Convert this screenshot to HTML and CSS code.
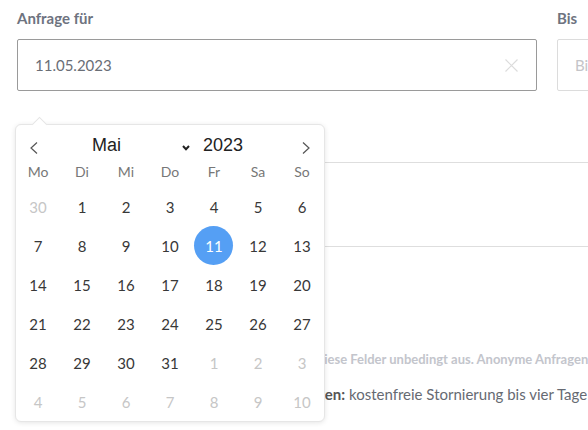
FILE: index.html
```html
<!DOCTYPE html>
<html lang="de">
<head>
<meta charset="utf-8">
<title>Anfrage</title>
<link rel="stylesheet" href="styles.css">
</head>
<body>
<div class="page">
  <div class="fields">
    <div class="field field-from">
      <label class="label">Anfrage für</label>
      <div class="input is-focused">
        <span class="value">11.05.2023</span>
        <svg class="clear" width="13" height="13" viewBox="0 0 13 13"><path d="M0.5 0.5 L12.5 12.5 M12.5 0.5 L0.5 12.5" stroke="#dcdcdc" stroke-width="1.2" fill="none"/></svg>
      </div>
    </div>
    <div class="field field-to">
      <label class="label">Bis</label>
      <div class="input">
        <span class="placeholder">Bis...</span>
      </div>
    </div>
  </div>

  <div class="row row-a"></div>
  <div class="row row-b"></div>

  <p class="hint">Für eine schnelle Bearbeitung füllen Sie bitte immer diese Felder unbedingt aus. Anonyme Anfragen werden nicht bearbeitet.</p>
  <p class="storno"><b>Kurzer Hinweis zu den Stornierungsbedingungen:</b> kostenfreie Stornierung bis vier Tage vor der Veranstaltung.</p>

  <div class="datepicker">
    <div class="dp-head">
      <button class="dp-nav dp-prev" aria-label="Vorheriger Monat">
        <svg width="8" height="12" viewBox="0 0 8 12"><path d="M7 0.5 L1 6 L7 11.5" stroke="#555" stroke-width="1.2" fill="none"/></svg>
      </button>
      <div class="dp-month">
        <span>Mai</span>
        <svg class="dp-caret" width="8" height="6" viewBox="0 0 8 6"><path d="M1 1 L4 4.2 L7 1" stroke="#222" stroke-width="2" fill="none"/></svg>
      </div>
      <span class="dp-year">2023</span>
      <button class="dp-nav dp-next" aria-label="Nächster Monat">
        <svg width="8" height="12" viewBox="0 0 8 12"><path d="M1 0.5 L7 6 L1 11.5" stroke="#555" stroke-width="1.2" fill="none"/></svg>
      </button>
    </div>
    <div class="dp-weekdays">
      <span>Mo</span><span>Di</span><span>Mi</span><span>Do</span><span>Fr</span><span>Sa</span><span>So</span>
    </div>
    <div class="dp-days">
      <span class="day muted">30</span><span class="day">1</span><span class="day">2</span><span class="day">3</span><span class="day">4</span><span class="day">5</span><span class="day">6</span>
      <span class="day">7</span><span class="day">8</span><span class="day">9</span><span class="day">10</span><span class="day selected">11</span><span class="day">12</span><span class="day">13</span>
      <span class="day">14</span><span class="day">15</span><span class="day">16</span><span class="day">17</span><span class="day">18</span><span class="day">19</span><span class="day">20</span>
      <span class="day">21</span><span class="day">22</span><span class="day">23</span><span class="day">24</span><span class="day">25</span><span class="day">26</span><span class="day">27</span>
      <span class="day">28</span><span class="day">29</span><span class="day">30</span><span class="day">31</span><span class="day muted">1</span><span class="day muted">2</span><span class="day muted">3</span>
      <span class="day muted">4</span><span class="day muted">5</span><span class="day muted">6</span><span class="day muted">7</span><span class="day muted">8</span><span class="day muted">9</span><span class="day muted">10</span>
    </div>
  </div>
</div>
</body>
</html>
```

FILE: styles.css
```css
* { box-sizing: border-box; }

html, body {
  margin: 0;
  padding: 0;
  background: #fff;
  overflow: hidden;
}

body {
  font-family: Lato, "Open Sans", Arial, sans-serif;
  color: #333;
  width: 588px;
  height: 430px;
}

.page {
  position: relative;
  padding: 8px 0 0 17px;
  width: 588px;
  height: 430px;
  overflow: hidden;
}

.fields {
  display: flex;
  gap: 20px;
  width: 1100px;
}

.field {
  display: flex;
  flex-direction: column;
  width: 520px;
  flex: none;
}

.label {
  font-size: 15px;
  font-weight: 700;
  color: #6e7380;
  line-height: 20px;
  height: 20px;
  margin-bottom: 11px;
}

.input {
  height: 52px;
  border: 1px solid #dcdcdc;
  border-radius: 2px;
  display: flex;
  align-items: center;
  padding: 0 18px 0 17px;
  font-size: 15px;
}

.input.is-focused {
  border-color: #9a9a9a;
}

.value {
  flex: 1;
  color: #6a6e76;
}

.placeholder {
  color: #c4c4c8;
}

.clear {
  display: block;
}

.row {
  border-bottom: 1px solid #dedede;
  margin-right: -17px;
}

.row-a { height: 72px; }
.row-b { height: 84px; }

.hint {
  margin: 103px 0 0 0;
  font-size: 13px;
  font-weight: 700;
  color: #c3c5cc;
  white-space: nowrap;
  line-height: 18px;
}

.storno {
  margin: 16px 0 0 0;
  font-size: 15px;
  color: #666a72;
  white-space: nowrap;
  line-height: 20px;
}

.storno b { font-weight: 700; color: #555; }

/* Datepicker overlay */
.datepicker {
  position: absolute;
  top: 124px;
  left: 15px;
  width: 310px;
  height: 298px;
  background: #fff;
  border: 1px solid #e6e6e6;
  border-radius: 6px;
  box-shadow: 0 1px 5px rgba(0, 0, 0, 0.10);
  z-index: 2;
}

.datepicker::before {
  content: "";
  position: absolute;
  top: -6px;
  left: 18px;
  width: 10px;
  height: 10px;
  background: #fff;
  border-top: 1px solid #e6e6e6;
  border-left: 1px solid #e6e6e6;
  transform: rotate(45deg);
}

.dp-head {
  display: flex;
  align-items: center;
  height: 28px;
  margin-top: 6px;
  padding: 0 14px;
}

.dp-nav {
  border: 0;
  background: none;
  padding: 0;
  width: 8px;
  height: 12px;
  display: flex;
  margin-top: 5px;
}

.dp-month {
  display: flex;
  align-items: center;
  justify-content: space-between;
  width: 98px;
  margin-left: 54px;
  font-family: "Liberation Sans", Arial, sans-serif;
  font-size: 18px;
  color: #222;
}

.dp-caret {
  margin-top: 5px;
}

.dp-year {
  margin-left: 13px;
  font-family: "Liberation Sans", Arial, sans-serif;
  font-size: 18px;
  color: #222;
  flex: 1;
}

.dp-weekdays {
  display: grid;
  grid-template-columns: repeat(7, 44px);
  height: 28px;
  padding-bottom: 4px;
  align-items: center;
  font-size: 14px;
  color: #777;
  text-align: center;
}

.dp-days {
  display: grid;
  grid-template-columns: repeat(7, 44px);
  grid-auto-rows: 39px;
}

.day {
  display: flex;
  align-items: center;
  justify-content: center;
  font-size: 15px;
  color: #383838;
}

.day.muted { color: #c6c6c6; }

.day.selected {
  color: #fff;
  position: relative;
  z-index: 0;
}

.day.selected::before {
  content: "";
  position: absolute;
  width: 39px;
  height: 39px;
  border-radius: 50%;
  background: #559ff4;
  left: 2px;
  top: 0;
  z-index: -1;
}
```
